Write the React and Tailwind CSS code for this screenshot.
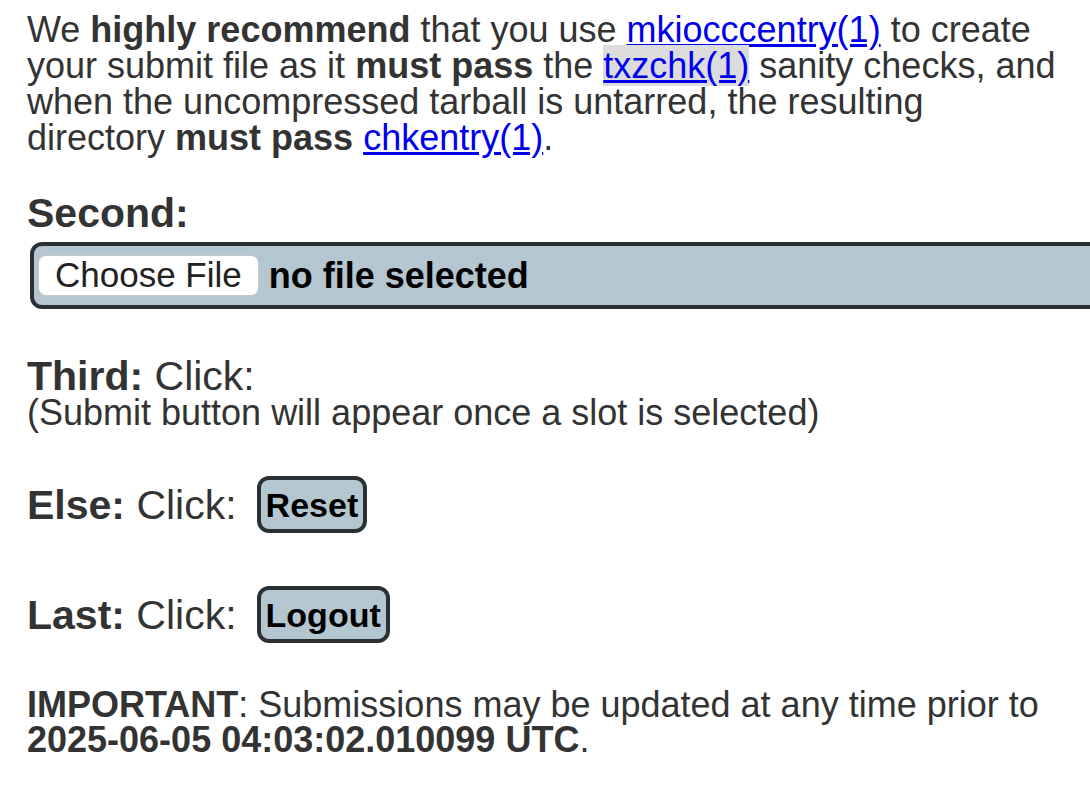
export default function App() {
  const font = { fontFamily: '"Liberation Sans", Arial, Helvetica, sans-serif' };
  return (
    <div className="min-h-[796px] bg-white text-[#333333] overflow-hidden" style={font}>
      <div className="pl-[27px] pr-[20px] pt-[12px]">
        <p className="text-[36px] leading-[36px] w-[1034px]">
          We <b>highly recommend</b> that you use{" "}
          <a href="#" className="text-[#0000ee] underline">mkiocccentry(1)</a> to create
          your submit file as it <b>must pass</b> the{" "}
          <a href="#" className="text-[#0000ee] underline bg-[#dcdcdc]">txzchk(1)</a> sanity checks, and
          when the uncompressed tarball is untarred, the resulting directory <b>must pass</b>{" "}
          <a href="#" className="text-[#0000ee] underline">chkentry(1)</a>.
        </p>

        <h3 className="mt-[33px] text-[41px] leading-[48px] font-bold">Second:</h3>

        <div className="mt-[5px] ml-[3px] w-[1100px] h-[67px] border-[4px] border-[#2b3034] rounded-[12px] bg-[#b4c6d0] flex items-center pl-[4px]">
          <span className="h-[41px] px-[16px] bg-white border border-[#c8c8c8] rounded-[8px] flex items-center text-[35px] text-[#222222]">
            Choose File
          </span>
          <span className="ml-[10px] text-[36px] font-bold text-black">no file selected</span>
        </div>

        <div className="mt-[46px] text-[41px] leading-[42px]">
          <b>Third:</b> Click:
        </div>
        <div className="text-[36px] leading-[32px]">(Submit button will appear once a slot is selected)</div>

        <div className="mt-[47px] flex items-center text-[41px] leading-[48px]">
          <span><b>Else:</b> Click:</span>
          <span className="ml-[20px] h-[57px] px-[5px] border-[4px] border-[#2b3034] rounded-[12px] bg-[#b4c6d0] flex items-center text-[34px] font-bold text-black">
            Reset
          </span>
        </div>

        <div className="mt-[53px] flex items-center text-[41px] leading-[48px]">
          <span><b>Last:</b> Click:</span>
          <span className="ml-[20px] h-[57px] px-[5px] border-[4px] border-[#2b3034] rounded-[12px] bg-[#b4c6d0] flex items-center text-[34px] font-bold text-black">
            Logout
          </span>
        </div>

        <p className="mt-[44px] text-[36px] leading-[35px] w-[1034px]">
          <b>IMPORTANT</b>: Submissions may be updated at any time prior to{" "}
          <b>2025-06-05 04:03:02.010099 UTC</b>.
        </p>
      </div>
    </div>
  );
}
